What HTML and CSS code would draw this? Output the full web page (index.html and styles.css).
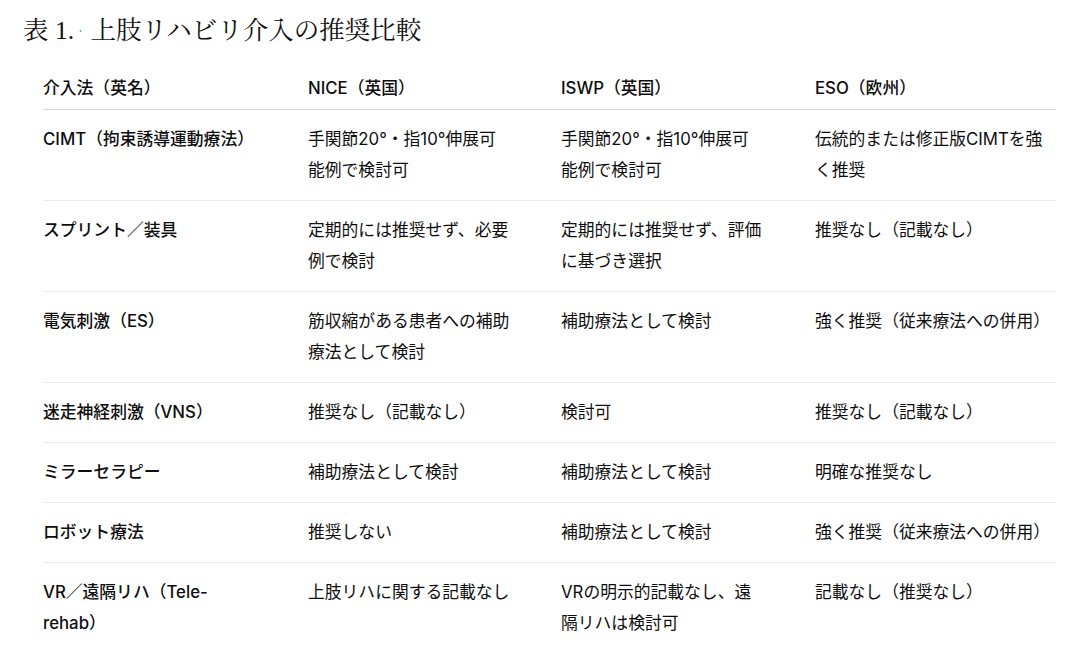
FILE: index.html
```html
<!DOCTYPE html>
<html lang="ja">
<head>
<meta charset="utf-8">
<title>表 1. 上肢リハビリ介入の推奨比較</title>
<link rel="stylesheet" href="styles.css">
</head>
<body>
<div class="page">
  <h1 class="title">表 1.<span class="cursor">·</span> 上肢リハビリ介入の推奨比較</h1>
  <table class="cmp">
    <colgroup>
      <col class="c1"><col class="c2"><col class="c3"><col class="c4">
    </colgroup>
    <thead>
      <tr><th>介入法（英名）</th><th>NICE（英国）</th><th>ISWP（英国）</th><th>ESO（欧州）</th></tr>
    </thead>
    <tbody>
      <tr><td>CIMT（拘束誘導運動療法）</td><td>手関節20°・指10°伸展可能例で検討可</td><td>手関節20°・指10°伸展可能例で検討可</td><td>伝統的または修正版CIMTを強く推奨</td></tr>
      <tr><td>スプリント／装具</td><td>定期的には推奨せず、必要例で検討</td><td>定期的には推奨せず、評価に基づき選択</td><td>推奨なし（記載なし）</td></tr>
      <tr><td>電気刺激（ES）</td><td>筋収縮がある患者への補助療法として検討</td><td>補助療法として検討</td><td>強く推奨（従来療法への併用）</td></tr>
      <tr><td>迷走神経刺激（VNS）</td><td>推奨なし（記載なし）</td><td>検討可</td><td>推奨なし（記載なし）</td></tr>
      <tr><td>ミラーセラピー</td><td>補助療法として検討</td><td>補助療法として検討</td><td>明確な推奨なし</td></tr>
      <tr><td>ロボット療法</td><td>推奨しない</td><td>補助療法として検討</td><td>強く推奨（従来療法への併用）</td></tr>
      <tr><td>VR／遠隔リハ（Tele-rehab）</td><td>上肢リハに関する記載なし</td><td>VRの明示的記載なし、遠隔リハは検討可</td><td>記載なし（推奨なし）</td></tr>
    </tbody>
  </table>
</div>
</body>
</html>
```

FILE: styles.css
```css
html, body {
  margin: 0;
  padding: 0;
  background: #ffffff;
}

.page {
  padding: 13px 0 0 0;
}

.title {
  margin: 0 0 24px 23px;
  font-family: "Liberation Serif", "Noto Serif CJK JP", "Noto Sans CJK JP", serif;
  font-weight: 400;
  font-size: 25.5px;
  line-height: 36px;
  height: 36px;
  color: #111111;
  letter-spacing: 0;
}

.cursor {
  color: #6fb0de;
  font-family: "DejaVu Sans", sans-serif;
  font-size: 16px;
  line-height: 0;
  margin: 0 1px 0 4px;
  vertical-align: 2px;
}

.cmp {
  margin-left: 43px;
  width: 1013px;
  table-layout: fixed;
  border-collapse: collapse;
  font-family: "Inter", "Noto Sans CJK JP", sans-serif;
  font-size: 16.8px;
  line-height: 31px;
  color: #0d0d0d;
}

.c1 { width: 265px; }
.c2 { width: 253px; }
.c3 { width: 254px; }
.c4 { width: 241px; }

.cmp th {
  text-align: left;
  font-weight: 500;
  padding: 0 50px 5px 0;
  border-bottom: 1px solid #d6d6d6;
  vertical-align: top;
}

.cmp td {
  padding: 14px 50px 14px 0;
  vertical-align: top;
  border-bottom: 1px solid #ececec;
}

.cmp th:last-child,
.cmp td:last-child {
  padding-right: 3px;
}

.cmp td:first-child {
  font-weight: 500;
}

.cmp tbody tr:last-child td {
  border-bottom: none;
}
```
